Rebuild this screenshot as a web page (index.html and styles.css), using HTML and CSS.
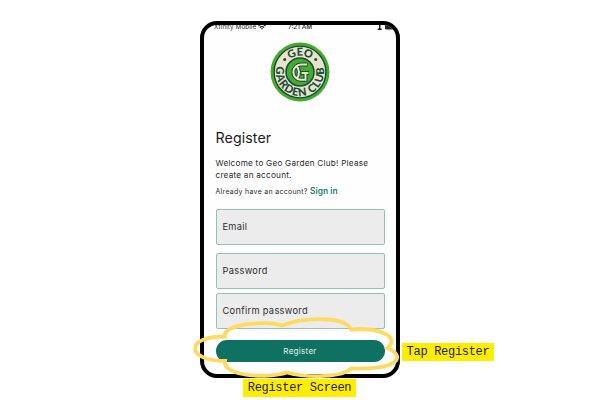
FILE: index.html
```html
<!DOCTYPE html>
<html lang="en">
<head>
<meta charset="utf-8">
<title>Register Screen</title>
<link rel="stylesheet" href="styles.css">
</head>
<body>
<main class="stage">
  <section class="phone">
    <header class="status">
      <span class="carrier">Xfinity Mobile
        <svg class="wifi" width="8" height="6" viewBox="0 0 8 6"><path d="M.4 2.1Q4-1 7.6 2.1M1.8 3.5Q4 1.7 6.2 3.5" fill="none" stroke="#222" stroke-width="1.1"/><path d="M2.9 4.3h2.2L4 5.7z" fill="#222"/></svg>
      </span>
      <span class="time">7:21 AM</span>
      <svg class="battery" width="20" height="6" viewBox="0 0 20 6"><path d="M2 0h1.5v3.5h1.3V5H.7V3.5H2zM8 0h12v4.500H9.500Q8 4.500 8 3z" fill="#222"/></svg>
    </header>
    <svg class="logo" width="60" height="60" viewBox="-30 -30 60 60">
      <defs>
        <path id="arc-top" d="M-16.3 0A16.3 16.3 0 0 1 16.3 0"/>
        <path id="arc-bottom" d="M-22.3 -9.200A24.100 24.100 0 1 0 22.3 -9.200"/>
      </defs>
      <circle r="29.500" fill="#43ac2b"/>
      <circle r="25.900" fill="#eae3ca" stroke="#174b3b" stroke-width="1.4"/>
      <circle r="14" fill="#43ac2b" stroke="#174b3b" stroke-width="1.5"/>
      <text class="logo-text"><textPath href="#arc-top" startOffset="50%" text-anchor="middle">GEO</textPath></text>
      <text class="logo-text logo-text-long"><textPath href="#arc-bottom" startOffset="50%" text-anchor="middle">GARDEN CLUB</textPath></text>
      <circle cx="-15.3" cy="-12.6" r="1.5" fill="#174b3b"/>
      <circle cx="15.7" cy="-12.6" r="1.5" fill="#174b3b"/>
      <g fill="none">
        <path d="M7.5 -7.4H1A7.5 7.5 0 0 0 1 7.8H5.5V1H1M-3.8 -6.5Q1.5 0 -3.2 7M5.5 1H9" stroke="#174b3b" stroke-width="4"/>
        <path d="M7 -7.4H1A7.5 7.5 0 0 0 1 7.8H5.5V1H1.5M-3.8 -6.5Q1.5 0 -3.2 7M5.5 1H8.500" stroke="#eae3ca" stroke-width="2"/>
      </g>
    </svg>
    <h1 class="title">Register</h1>
    <p class="welcome">Welcome to Geo Garden Club! Please<br>create an account.</p>
    <p class="signin">Already have an account? <a class="link">Sign in</a></p>
    <div class="field">Email</div>
    <div class="field field-password">Password</div>
    <div class="field field-confirm">Confirm password</div>
    <div class="button">Register</div>
  </section>
  <svg class="cloud" width="230" height="90" viewBox="185 300 230 90"><path d="M225 336.500C221 325 266 319.500 282 325.500C305 317 345 316 351 329.500C376 327 402 336 387.500 348C406 356 400 370 351 368.500C343 377 309 378.500 287 372.500C267 379 222 376 225 361C186 361 184 336 225 336.500Z" fill="none" stroke="#ffda5e" stroke-width="3.8"/></svg>
  <span class="note note-tap">Tap Register</span>
  <span class="note note-screen">Register Screen</span>
</main>
</body>
</html>
```

FILE: styles.css
```css
* { box-sizing: border-box; }

body {
  margin: 0;
  background: #fff;
  font-family: Inter, "Liberation Sans", sans-serif;
  color: #2c2c2c;
}

.stage {
  position: relative;
  width: 600px;
  height: 400px;
  padding-top: 21px;
  overflow: hidden;
}

.phone {
  display: flex;
  flex-direction: column;
  width: 200px;
  height: 357px;
  margin: 0 auto;
  padding: 0 11.5px;
  border: 4px solid #000;
  border-radius: 17px;
  background: #fefefe;
  overflow: hidden;
}

.status {
  display: grid;
  grid-template-columns: 74px 1fr 22px;
  height: 6px;
  margin: 0 -12px 0 -1.5px;
  font-size: 6.4px;
  line-height: 4px;
  white-space: nowrap;
}

.carrier { letter-spacing: 0.05px; }
.wifi { margin-top: -1px; vertical-align: top; }
.time { font-weight: 500; }
.battery { justify-self: end; }

.logo {
  flex: none;
  align-self: center;
  margin-top: 11px;
}

.logo-text {
  font-family: Lato, sans-serif;
  font-size: 11px;
  font-weight: 900;
  letter-spacing: -0.3px;
  fill: #174b3b;
}

.logo-text-long { letter-spacing: 0.9px; }

.title {
  margin: 26px 0 0;
  font-size: 14.2px;
  font-weight: 400;
  line-height: 20px;
  letter-spacing: 0.1px;
  color: #1c1c1c;
}

.welcome {
  margin: 9px 0 0;
  font-size: 8.2px;
  line-height: 12px;
  letter-spacing: 0.23px;
  white-space: nowrap;
}

.signin {
  margin: 4px 0 0;
  font-size: 7px;
  line-height: 12px;
  letter-spacing: 0.28px;
  white-space: nowrap;
}

.link {
  color: #208271;
  font-size: 8.4px;
  font-weight: 600;
  letter-spacing: 0.05px;
}

.field {
  flex: none;
  width: 169px;
  height: 36px;
  margin-top: 11px;
  padding-left: 6px;
  border: 1px solid #94c0b8;
  border-radius: 2px;
  background: #ececec;
  font-size: 9.2px;
  line-height: 34px;
  letter-spacing: 0.35px;
}

.field-password { margin-top: 8px; }
.field-confirm { margin-top: 4px; }

.button {
  flex: none;
  width: 169px;
  height: 21.5px;
  margin-top: 11px;
  border-radius: 11px;
  background: #0e7161;
  color: #e4f2ed;
  font-size: 8px;
  line-height: 22px;
  letter-spacing: 0.3px;
  text-align: center;
}

.cloud {
  position: absolute;
  left: 185px;
  top: 300px;
}

.note {
  position: absolute;
  height: 18px;
  background: #ffed00;
  color: #222;
  font-family: "Liberation Mono", monospace;
  font-size: 12px;
  line-height: 19px;
  letter-spacing: -0.3px;
  text-align: center;
  white-space: nowrap;
}

.note-tap { left: 402px; top: 343px; width: 92px; }
.note-screen { left: 243px; top: 379px; width: 113px; }
```
